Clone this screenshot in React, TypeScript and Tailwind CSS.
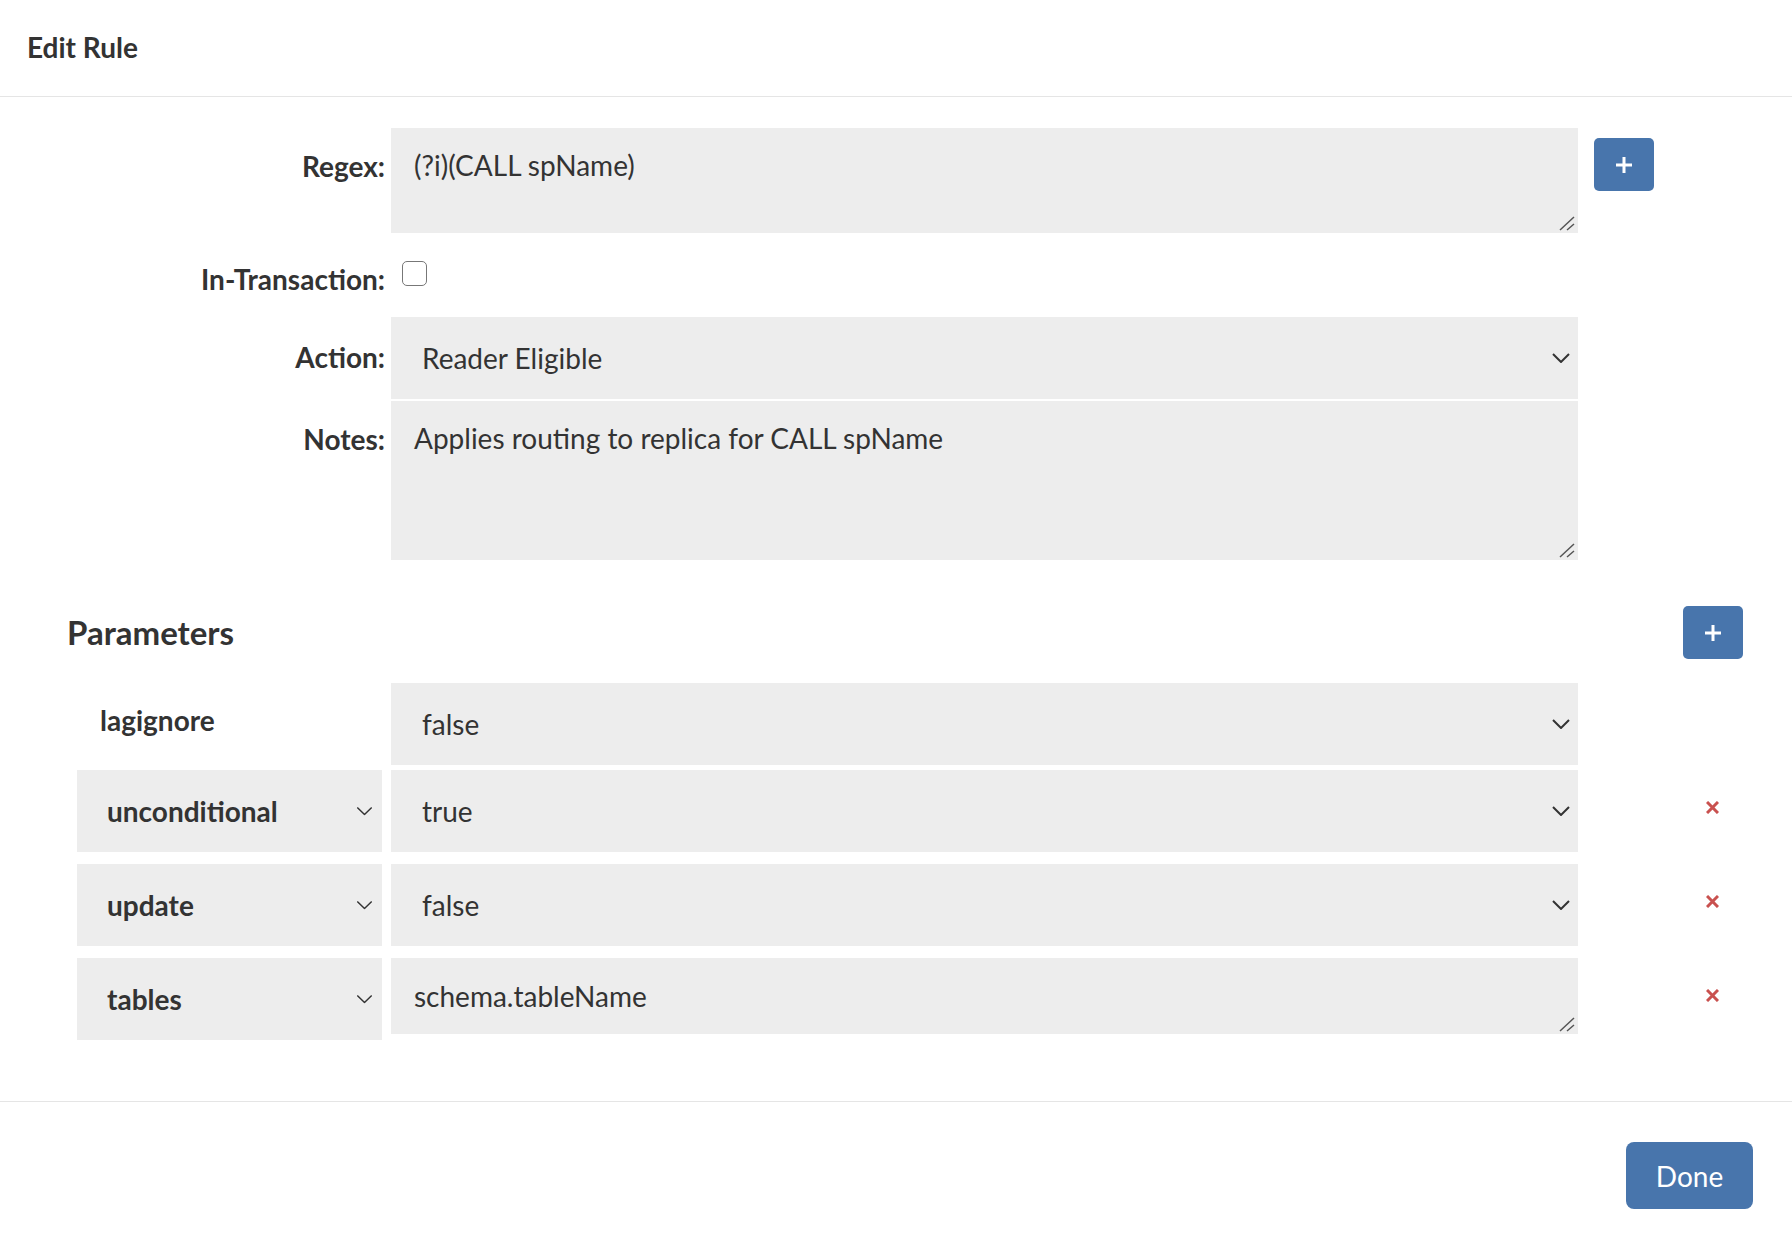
import React from 'react'

function Chevron({ className, width = 2 }: { className?: string; width?: number }) {
  return (
    <svg viewBox="0 0 18 10" fill="none" stroke="#333" strokeWidth={width} className={className}>
      <path d="M1 1l8 8 8-8" />
    </svg>
  )
}

function PlusIcon() {
  return (
    <svg viewBox="0 0 16 16" className="h-[16px] w-[16px]" stroke="#fff" strokeWidth="3">
      <path d="M8 0v16M0 8h16" />
    </svg>
  )
}

function RemoveIcon() {
  return (
    <svg viewBox="0 0 13 13" className="h-[13px] w-[13px]" stroke="#c9514f" strokeWidth="3">
      <path d="M1 1l11 11M12 1L1 12" />
    </svg>
  )
}

// resize grip drawn over the textarea corner
function Grip() {
  return (
    <svg
      viewBox="0 0 16 15"
      className="pointer-events-none absolute bottom-[2px] right-[3px] h-[15px] w-[16px]"
      stroke="#555"
      strokeWidth="1.5"
    >
      <path d="M15 1L1 14M15 8L8 14" />
    </svg>
  )
}

function Area({ value, className }: { value: string; className: string }) {
  return (
    <div className="relative w-[1187px] shrink-0">
      <textarea
        defaultValue={value}
        className={`block w-full resize-none bg-[#ededed] px-[23px] text-[28px] leading-[40px] outline-none ${className}`}
      />
      <Grip />
    </div>
  )
}

function ValueSelect({ value, options }: { value: string; options: string[] }) {
  return (
    <div className="relative h-[82px] w-[1187px] shrink-0">
      <select
        defaultValue={value}
        className="h-full w-full appearance-none bg-[#ededed] pl-[31px] text-[28px] text-[#333] outline-none"
      >
        {options.map((o) => (
          <option key={o}>{o}</option>
        ))}
      </select>
      <Chevron className="pointer-events-none absolute right-[8px] top-1/2 h-[10px] w-[18px] -translate-y-1/2" />
    </div>
  )
}

function KeySelect({ value }: { value: string }) {
  return (
    <div className="relative h-[82px] w-[305px] shrink-0">
      <select
        defaultValue={value}
        className="h-full w-full appearance-none bg-[#ededed] pl-[30px] text-[28px] font-bold text-[#333] outline-none"
      >
        <option>unconditional</option>
        <option>update</option>
        <option>tables</option>
      </select>
      <Chevron width={1.6} className="pointer-events-none absolute right-[9px] top-1/2 h-[9px] w-[17px] -translate-y-1/2" />
    </div>
  )
}

const label = 'w-[385px] shrink-0 text-right text-[28px] font-bold leading-[40px] text-[#333]'

export default function App() {
  return (
    <div className="min-h-[1246px] bg-white font-['Lato',sans-serif] text-[#333]">
      <div className="flex h-[97px] items-center border-b border-[#e5e5e5] px-[27px] pb-[2px]">
        <h1 className="text-[28px] font-bold">Edit Rule</h1>
      </div>

      <div className="pb-[61px] pt-[31px]">
        <div className="flex items-start">
          <label className={`${label} pt-[18px]`}>Regex:</label>
          <div className="ml-[6px]">
            <Area value="(?i)(CALL spName)" className="h-[105px] pt-[17px]" />
          </div>
          <button className="ml-[16px] mt-[10px] grid h-[53px] w-[60px] place-items-center rounded-[5px] bg-[#4875ac]">
            <PlusIcon />
          </button>
        </div>

        <div className="mt-[26px] flex items-start">
          <label className={label}>In-Transaction:</label>
          <input
            type="checkbox"
            className="ml-[17px] mt-[2px] h-[25px] w-[25px] appearance-none rounded-[5px] border-[1.5px] border-[#777] bg-white"
          />
        </div>

        <div className="mt-[18px] flex items-start">
          <label className={`${label} pt-[20px]`}>Action:</label>
          <div className="ml-[6px]">
            <ValueSelect value="Reader Eligible" options={['Reader Eligible', 'Writer', 'Reader']} />
          </div>
        </div>

        <div className="mt-[2px] flex items-start">
          <label className={`${label} pt-[18px]`}>Notes:</label>
          <div className="ml-[6px]">
            <Area value="Applies routing to replica for CALL spName" className="h-[159px] pt-[17px]" />
          </div>
        </div>

        <div className="mt-[46px] flex h-[53px] items-center justify-between pl-[67px] pr-[49px]">
          <h2 className="text-[33px] font-bold leading-none">Parameters</h2>
          <button className="grid h-[53px] w-[60px] place-items-center rounded-[5px] bg-[#4875ac]">
            <PlusIcon />
          </button>
        </div>

        <div className="mt-[24px] flex items-center pl-[77px]">
          <div className="flex h-[82px] w-[305px] shrink-0 items-center pb-[8px] pl-[23px] text-[28px] font-bold">
            lagignore
          </div>
          <div className="ml-[9px]">
            <ValueSelect value="false" options={['true', 'false']} />
          </div>
        </div>

        <div className="mt-[5px] flex items-center pl-[77px]">
          <KeySelect value="unconditional" />
          <div className="ml-[9px]">
            <ValueSelect value="true" options={['true', 'false']} />
          </div>
          <button className="mb-[8px] ml-[128px]">
            <RemoveIcon />
          </button>
        </div>

        <div className="mt-[12px] flex items-center pl-[77px]">
          <KeySelect value="update" />
          <div className="ml-[9px]">
            <ValueSelect value="false" options={['true', 'false']} />
          </div>
          <button className="mb-[8px] ml-[128px]">
            <RemoveIcon />
          </button>
        </div>

        <div className="mt-[12px] flex items-center pl-[77px]">
          <KeySelect value="tables" />
          <div className="mb-[6px] ml-[9px]">
            <Area value="schema.tableName" className="h-[76px] pt-[18px]" />
          </div>
          <button className="mb-[8px] ml-[128px]">
            <RemoveIcon />
          </button>
        </div>
      </div>

      <div className="flex justify-end border-t border-[#e5e5e5] pr-[39px] pt-[40px]">
        <button className="h-[67px] w-[127px] rounded-[8px] bg-[#4875ac] text-[28px] text-white">Done</button>
      </div>
    </div>
  )
}
